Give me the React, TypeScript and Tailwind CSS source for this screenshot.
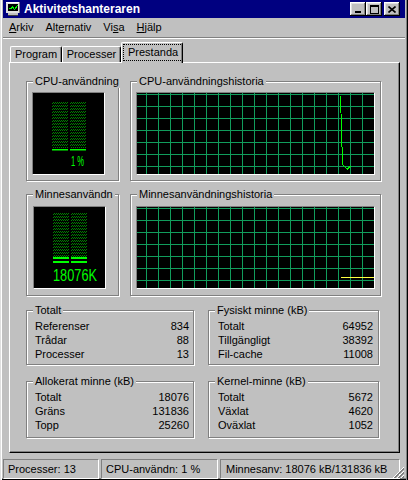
import React from "react";

// Aktivitetshanteraren, fliken Prestanda (Windows 2000-stil)

const GRID = "#119c5c";

function GroupBox({ label, className, children }: { label: string; className: string; children?: React.ReactNode }) {
  return (
    <div className={`relative border border-[#808080] shadow-[inset_1px_1px_0_#fff,1px_1px_0_#fff] ${className}`}>
      <span className="absolute -top-[8px] left-[6px] bg-[#c0c0c0] px-[2px] leading-[14px] whitespace-nowrap">{label}</span>
      {children}
    </div>
  );
}

function Grid({ children }: { children?: React.ReactNode }) {
  const xs = Array.from({ length: 19 }, (_, i) => 9 + i * 12);
  const ys = Array.from({ length: 7 }, (_, i) => 1 + i * 12);
  return (
    <svg width="237" height="81" viewBox="0 0 237 81" shapeRendering="crispEdges" className="block">
      {xs.map((x) => (
        <line key={"x" + x} x1={x + 0.5} y1="0" x2={x + 0.5} y2="81" stroke={GRID} />
      ))}
      {ys.map((y) => (
        <line key={"y" + y} x1="0" y1={y + 0.5} x2="237" y2={y + 0.5} stroke={GRID} />
      ))}
      {children}
    </svg>
  );
}

function Leds({ top, bottom }: { top: number; bottom: number }) {
  return (
    <>
      <rect x="19" y={top} width="16" height={bottom - top} fill="url(#led)" />
      <rect x="37" y={top} width="16" height={bottom - top} fill="url(#led)" />
    </>
  );
}

function Meter({ kind }: { kind: "cpu" | "mem" }) {
  return (
    <svg width="71" height="81" viewBox="0 0 71 81" className="block">
      <defs>
        <pattern id="led" width="2" height="3" patternUnits="userSpaceOnUse">
          <rect x="0" y="0" width="1" height="1" fill="#008000" />
          <rect x="1" y="1" width="1" height="1" fill="#008000" />
        </pattern>
      </defs>
      {kind === "cpu" ? (
        <>
          <Leds top={8} bottom={55} />
          <rect x="19" y="56" width="16" height="1.5" fill="#00ff00" />
          <rect x="37" y="56" width="16" height="1.5" fill="#00ff00" />
          <text
            x="38"
            y="58.4"
            transform="scale(1,1.25)"
            fontFamily="Liberation Sans, Arial, sans-serif"
            fontSize="12"
            fill="#00ff00"
            textLength="13"
            lengthAdjust="spacingAndGlyphs"
          >
            1 %
          </text>
        </>
      ) : (
        <>
          <Leds top={6} bottom={50} />
          <rect x="19" y="50" width="16" height="2" fill="#00ff00" />
          <rect x="37" y="50" width="16" height="2" fill="#00ff00" />
          <rect x="19" y="54" width="16" height="2" fill="#00ff00" />
          <rect x="37" y="54" width="16" height="2" fill="#00ff00" />
          <text
            x="19"
            y="59.2"
            transform="scale(1,1.25)"
            fontFamily="Liberation Sans, Arial, sans-serif"
            fontSize="13"
            fill="#00ff00"
            textLength="44"
            lengthAdjust="spacingAndGlyphs"
          >
            18076K
          </text>
        </>
      )}
    </svg>
  );
}

function Stats({ rows, className }: { rows: [string, string][]; className: string }) {
  return (
    <div className={className}>
      {rows.map(([k, v]) => (
        <div key={k} className="flex justify-between h-[14px] leading-[14px]">
          <span>{k}</span>
          <span>{v}</span>
        </div>
      ))}
    </div>
  );
}

function CaptionButton({ children }: { children: React.ReactNode }) {
  return (
    <div className="w-[16px] h-[14px] bg-[#c0c0c0] flex items-center justify-center shadow-[inset_-1px_-1px_0_#000,inset_1px_1px_0_#fff,inset_-2px_-2px_0_#808080,inset_2px_2px_0_#dfdfdf]">
      {children}
    </div>
  );
}

const sunken = "border border-t-[#808080] border-l-[#808080] border-r-white border-b-white";

export default function App() {
  return (
    <div className="relative w-[408px] h-[480px] overflow-hidden bg-[#c0c0c0] px-[3px] flex flex-col font-['Liberation_Sans',Arial,sans-serif] text-[11px] text-black leading-none shadow-[inset_1px_0_0_#dfdfdf,inset_2px_0_0_#fff,inset_-1px_0_0_#000,inset_-2px_0_0_#808080,inset_0_-1px_0_#000,inset_0_-2px_0_#808080]">
      {/* titelrad */}
      <div className="h-[18px] shrink-0 bg-[#000080] flex items-center pl-[2px] pr-[5px]">
        <svg width="16" height="16" viewBox="0 0 16 16" shapeRendering="crispEdges">
          <rect x="1" y="1" width="14" height="11" fill="#dfdfdf" />
          <rect x="1" y="1" width="14" height="1" fill="#fff" />
          <rect x="14" y="1" width="1" height="11" fill="#808080" />
          <rect x="3" y="3" width="10" height="7" fill="#000" />
          <polyline points="3.5,7.5 6.5,7.5 7.5,5.5 9.5,8.5 12.5,4.5" fill="none" stroke="#00ff00" />
          <rect x="3" y="12" width="10" height="3" fill="#c0c0c0" />
          <rect x="3" y="14" width="10" height="1" fill="#404040" />
        </svg>
        <span className="ml-[3px] text-white font-bold text-[12px]">Aktivitetshanteraren</span>
        <div className="ml-auto flex">
          <CaptionButton>
            <svg width="8" height="8" viewBox="0 0 8 8" shapeRendering="crispEdges">
              <rect x="1" y="6" width="6" height="2" fill="#000" />
            </svg>
          </CaptionButton>
          <CaptionButton>
            <svg width="9" height="9" viewBox="0 0 9 9" shapeRendering="crispEdges">
              <rect x="0.5" y="0.5" width="8" height="8" fill="none" stroke="#000" />
              <rect x="0" y="1" width="9" height="1" fill="#000" />
            </svg>
          </CaptionButton>
          <div className="w-[2px]" />
          <CaptionButton>
            <svg width="8" height="7" viewBox="0 0 8 7">
              <path d="M0.5 0.5 L7.5 6.5 M7.5 0.5 L0.5 6.5" stroke="#000" strokeWidth="1.6" />
            </svg>
          </CaptionButton>
        </div>
      </div>

      {/* meny */}
      <div className="h-[19px] shrink-0 flex items-center">
        <span className="px-[6px]">
          <span className="underline underline-offset-[1px]">A</span>rkiv
        </span>
        <span className="px-[6px]">
          Alt<span className="underline underline-offset-[1px]">e</span>rnativ
        </span>
        <span className="px-[6px]">
          Vi<span className="underline underline-offset-[1px]">s</span>a
        </span>
        <span className="px-[6px]">
          <span className="underline underline-offset-[1px]">H</span>jälp
        </span>
      </div>
      <div className="h-[2px] shrink-0 border-t border-b border-t-[#808080] border-b-white" />
      <div className="h-[3px] shrink-0" />

      {/* flikar */}
      <div className="h-[20px] shrink-0 flex items-end pl-[7px]">
        <div className="w-[52px] h-[16px] flex items-center justify-center border-t border-l border-t-white border-l-white border-r border-r-black shadow-[inset_-1px_0_0_#808080] rounded-t-[2px]">
          Program
        </div>
        <div className="w-[59px] h-[16px] flex items-center justify-center border-t border-l border-t-white border-l-white border-r border-r-black shadow-[inset_-1px_0_0_#808080] rounded-t-[2px]">
          Processer
        </div>
        <div className="relative z-10 -mb-px w-[62px] h-[21px] bg-[#c0c0c0] flex items-start pt-[1px] pl-[1px] border-t border-l border-t-white border-l-white border-r border-r-black shadow-[inset_-1px_0_0_#808080] rounded-t-[2px]">
          <span className="h-[17px] px-[4px] flex items-center border border-dotted border-black">Prestanda</span>
        </div>
      </div>

      {/* flikpanel */}
      <div className="ml-[6px] w-[391px] h-[391px] shrink-0 border-t border-l border-t-white border-l-white border-r border-b border-r-black border-b-black shadow-[inset_-1px_-1px_0_#808080] pl-[16px] pt-[18px] flex flex-col">
        <div className="flex gap-[11px] h-[100px] shrink-0">
          <GroupBox label="CPU-användning" className="w-[93px]">
            <div className={`mt-[10px] ml-[5px] w-[73px] h-[83px] bg-black ${sunken}`}>
              <Meter kind="cpu" />
            </div>
          </GroupBox>
          <GroupBox label="CPU-användningshistoria" className="w-[251px]">
            <div className={`mt-[10px] ml-[5px] w-[239px] h-[83px] bg-black ${sunken}`}>
              <Grid>
                <polyline
                  points="203.5,3 204,20 205,54 206,72 208,74 210.5,76 212.5,74 213.5,73"
                  fill="none"
                  stroke="#00ff00"
                  strokeWidth="1"
                />
              </Grid>
            </div>
          </GroupBox>
        </div>

        <div className="mt-[13px] flex gap-[11px] h-[102px] shrink-0">
          <GroupBox label="Minnesanvändn" className="w-[93px]">
            <div className={`mt-[11px] ml-[6px] w-[73px] h-[83px] bg-black ${sunken}`}>
              <Meter kind="mem" />
            </div>
          </GroupBox>
          <GroupBox label="Minnesanvändningshistoria" className="w-[251px]">
            <div className={`mt-[11px] ml-[5px] w-[239px] h-[83px] bg-black ${sunken}`}>
              <Grid>
                <line x1="204" y1="70.5" x2="237" y2="70.5" stroke="#ffff40" />
              </Grid>
            </div>
          </GroupBox>
        </div>

        <div className="mt-[14px] flex gap-[14px] h-[55px] shrink-0">
          <GroupBox label="Totalt" className="w-[168px]">
            <Stats
              className="pt-[8px] pl-[8px] pr-[4px]"
              rows={[
                ["Referenser", "834"],
                ["Trådar", "88"],
                ["Processer", "13"],
              ]}
            />
          </GroupBox>
          <GroupBox label="Fysiskt minne (kB)" className="w-[171px]">
            <Stats
              className="pt-[8px] pl-[9px] pr-[5px]"
              rows={[
                ["Totalt", "64952"],
                ["Tillgängligt", "38392"],
                ["Fil-cache", "11008"],
              ]}
            />
          </GroupBox>
        </div>

        <div className="mt-[16px] flex gap-[14px] h-[57px] shrink-0">
          <GroupBox label="Allokerat minne (kB)" className="w-[168px]">
            <Stats
              className="pt-[8px] pl-[8px] pr-[4px]"
              rows={[
                ["Totalt", "18076"],
                ["Gräns", "131836"],
                ["Topp", "25260"],
              ]}
            />
          </GroupBox>
          <GroupBox label="Kernel-minne (kB)" className="w-[171px]">
            <Stats
              className="pt-[8px] pl-[9px] pr-[5px]"
              rows={[
                ["Totalt", "5672"],
                ["Växlat", "4620"],
                ["Oväxlat", "1052"],
              ]}
            />
          </GroupBox>
        </div>
      </div>

      {/* statusfält */}
      <div className="relative mt-[6px] h-[20px] shrink-0 flex gap-[2px]">
        <div className={`w-[96px] ${sunken} flex items-center pl-[4px]`}>Processer: 13</div>
        <div className={`w-[117px] ${sunken} flex items-center pl-[4px]`}>CPU-användn: 1 %</div>
        <div className={`w-[180px] ${sunken} flex items-center pl-[5px]`}>Minnesanv: 18076 kB/131836 kB</div>
        <svg className="absolute right-[1px] bottom-[1px]" width="12" height="12" viewBox="0 0 12 12" shapeRendering="crispEdges">
          {[0, 4, 8].map((o) => (
            <g key={o}>
              <line x1={12} y1={o + 1} x2={o + 1} y2={12} stroke="#fff" />
              <line x1={12} y1={o + 2} x2={o + 2} y2={12} stroke="#808080" />
              <line x1={12} y1={o + 3} x2={o + 3} y2={12} stroke="#808080" />
            </g>
          ))}
        </svg>
      </div>
    </div>
  );
}
